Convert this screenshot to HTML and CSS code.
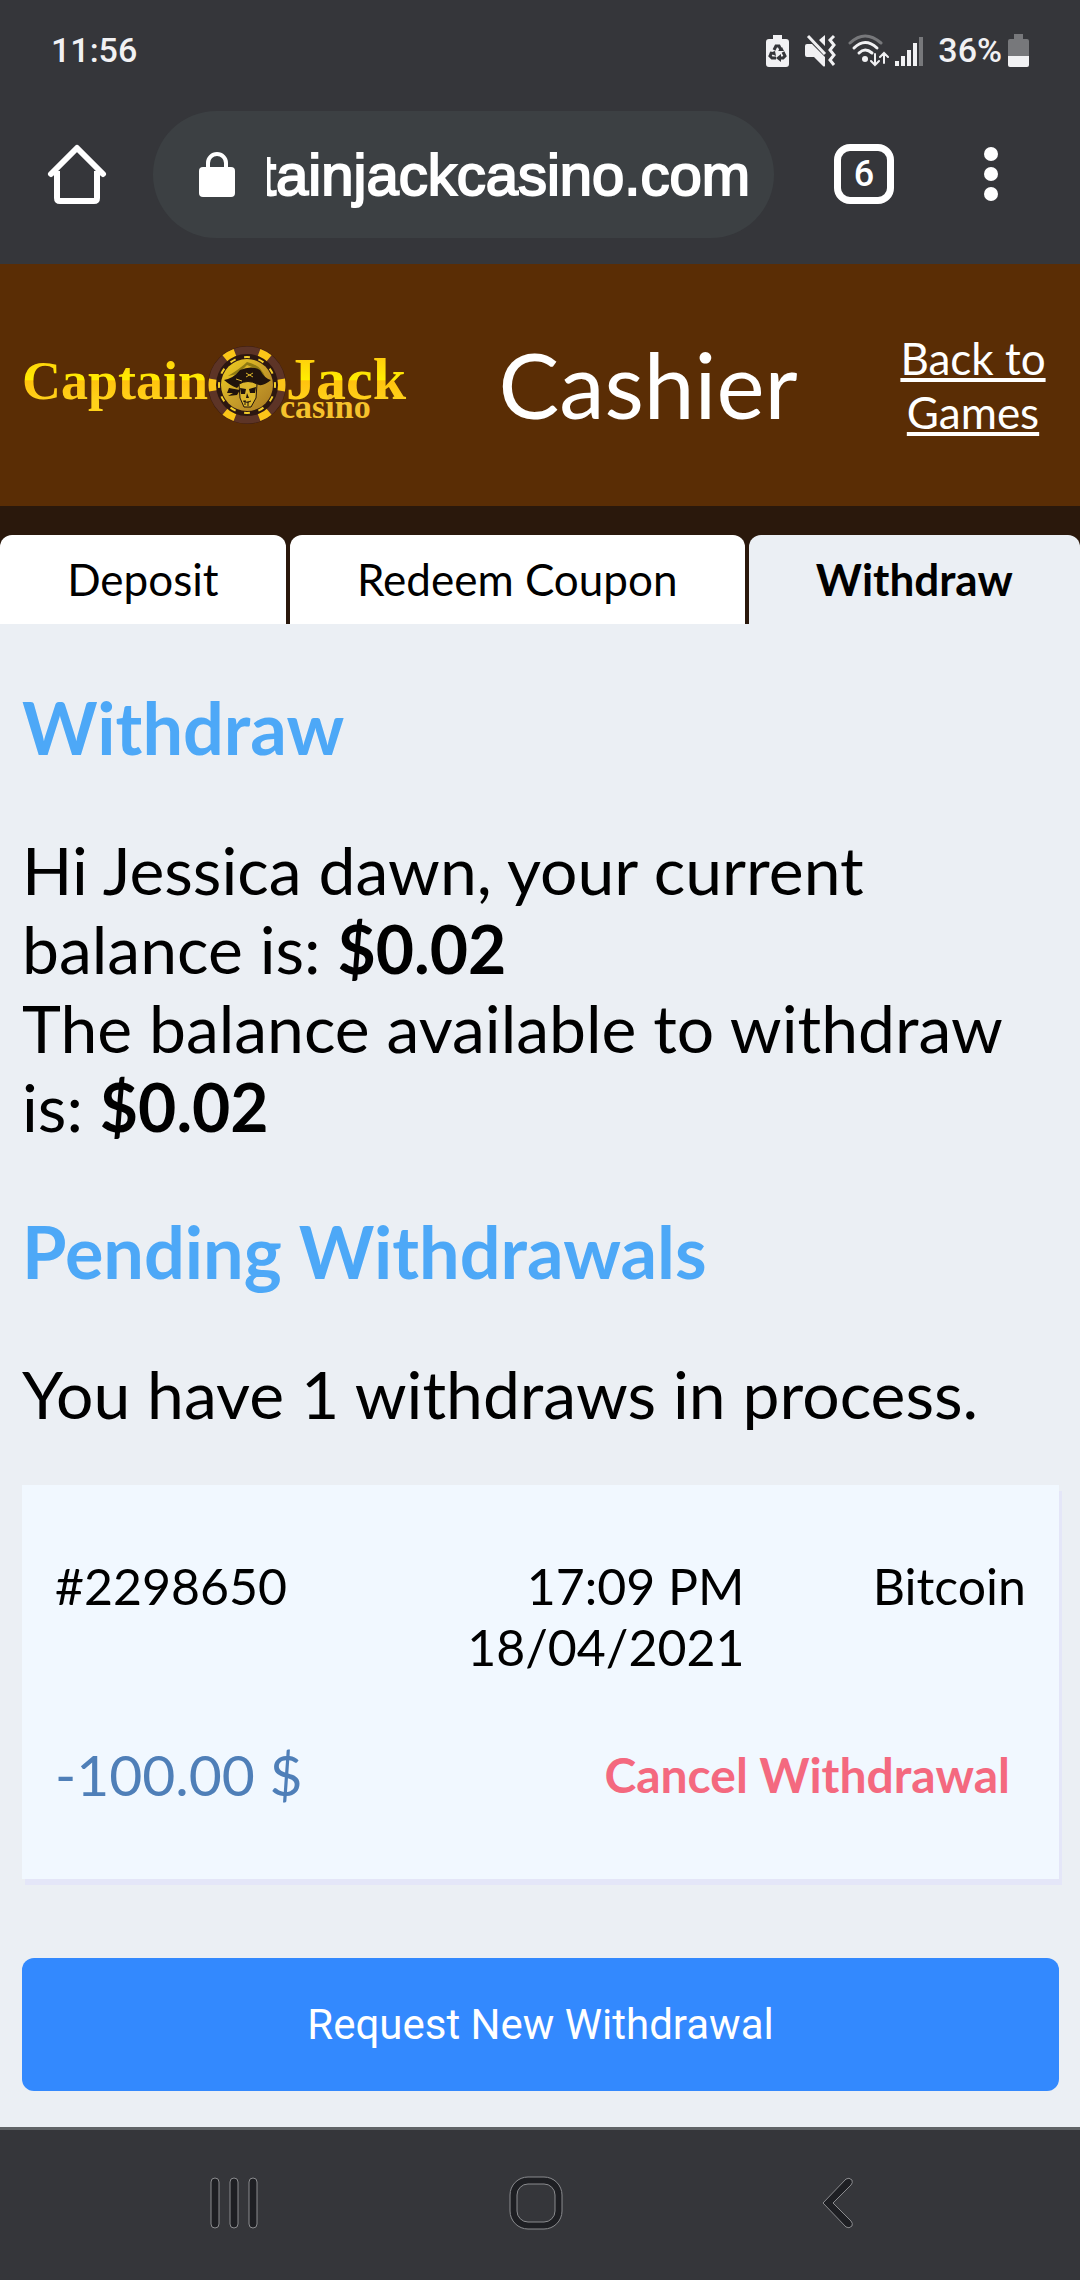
FILE: index.html
```html
<!DOCTYPE html>
<html lang="en">
<head>
    <meta charset="UTF-8">
    <meta name="viewport" content="width=device-width, initial-scale=1.0">
    <title>Captain Jack Casino - Cashier</title>
    <link rel="stylesheet" href="styles.css">
</head>
<body>

    <div class="chrome">
        <div class="status-bar">
            <span>11:56</span>
            <div class="status-icons">
                <svg width="23" height="33" viewBox="0 0 23 33">
                    <path fill="#f1f1f3" d="M7 1h9v4h4q3 0 3 3v22q0 3-3 3H3q-3 0-3-3V8q0-3 3-3h4z"/>
                    <g fill="none" stroke="#35363a" stroke-width="3">
                        <path d="M8 16l2-4h3l2 4"/>
                        <path d="M6 18l-2 4 2 2h4"/>
                        <path d="M17 18l2 4-2 2h-4"/>
                    </g>
                    <path fill="#35363a" d="M12 17h6l-2-4zM3 19l6-2 1 5zM15 20v8l-5-4z"/>
                </svg>
                <svg class="mute" width="31" height="33" viewBox="0 0 31 33">
                    <path fill="#f1f1f3" d="M0 12q0-2 2-2h5l13 13v9q-1 1-2 0l-9-9H2q-2 0-2-2zM20 1v11l-6-6z"/>
                    <path d="M3 2l17 18" stroke="#f1f1f3" stroke-width="3"/>
                    <path d="M29 2l-4 4 4 5-4 5 4 5-4 5 4 5" fill="none" stroke="#f1f1f3" stroke-width="3"/>
                </svg>
                <svg class="wifi" width="41" height="33" viewBox="0 0 41 33">
                    <g fill="none" stroke-width="3" stroke-linecap="round">
                        <path d="M2 9Q17-5 33 9" stroke="#77787b"/>
                        <path d="M6 14Q17 3 29 14" stroke="#f1f1f3"/>
                        <path d="M11 19Q17 13 24 19" stroke="#f1f1f3"/>
                        <path d="M27 20v11M23 27l4 4 4-4M36 29V19M32 23l4-4 4 4" stroke="#f1f1f3" stroke-width="2"/>
                    </g>
                    <circle cx="17" cy="25" r="3" fill="#f1f1f3"/>
                </svg>
                <svg class="signal" width="28" height="33" viewBox="0 0 28 33">
                    <path d="M2 27v5M8 22v10M14 16v16M20 9v23" stroke="#f1f1f3" stroke-width="4"/>
                    <path d="M26 3v29" stroke="#77787b" stroke-width="4"/>
                </svg>
                <span>36%</span>
                <svg width="21" height="33" viewBox="0 0 21 33">
                    <path fill="#77787b" d="M6 0h9v5h4q2 0 2 2v15H0V7q0-2 2-2h4z"/>
                    <path fill="#f1f1f3" d="M0 22h21v9q0 2-2 2H2q-2 0-2-2z"/>
                </svg>
            </div>
        </div>

        <div class="toolbar">
            <button class="icon-btn" aria-label="Home">
                <svg width="60" height="60" viewBox="0 0 60 60" fill="none" stroke="#fff" stroke-width="6" stroke-linejoin="round" stroke-linecap="round">
                    <path d="M4 30L30 4l26 26"/>
                    <path d="M10 27v27q0 3 3 3h34q3 0 3-3V27" stroke-linecap="butt"/>
                </svg>
            </button>
            <div class="address">
                <svg width="36" height="46" viewBox="0 0 36 46">
                    <path d="M9 18v-6a9 9 0 0 1 18 0v6" fill="none" stroke="#fff" stroke-width="4"/>
                    <rect y="16" width="36" height="30" rx="4" fill="#fff"/>
                </svg>
                <input class="url" type="text" aria-label="Address" value="tainjackcasino.com">
            </div>
            <button class="icon-btn tab-count" aria-label="Open tabs">6</button>
            <button class="icon-btn" aria-label="Menu">
                <svg width="14" height="54" viewBox="0 0 14 54" fill="#fff">
                    <circle cx="7" cy="7" r="7"/>
                    <circle cx="7" cy="27" r="7"/>
                    <circle cx="7" cy="47" r="7"/>
                </svg>
            </button>
        </div>
    </div>

    <header class="header">
        <svg class="logo" width="386" height="80" viewBox="0 0 386 80" role="img" aria-label="Captain Jack Casino">
            <defs>
                <linearGradient id="gold" x1="0" y1="10" x2="0" y2="56" gradientUnits="userSpaceOnUse">
                    <stop offset="0" stop-color="#ffc90f"/>
                    <stop offset=".54" stop-color="#ffee00"/>
                    <stop offset=".56" stop-color="#ffc20e"/>
                    <stop offset="1" stop-color="#ffd21a"/>
                </linearGradient>
                <linearGradient id="disc" x1="0" y1="0" x2="1" y2="1">
                    <stop offset="0" stop-color="#f3d21c"/>
                    <stop offset=".5" stop-color="#c9a02a"/>
                    <stop offset="1" stop-color="#a9781f"/>
                </linearGradient>
            </defs>
            <text class="logo-captain" x="0" y="54" fill="url(#gold)">Captain</text>
            <text class="logo-jack" x="264" y="54" fill="url(#gold)">Jack</text>

            <!-- poker chip -->
            <circle cx="225" cy="40" r="39" fill="#3a1c12"/>
            <circle cx="225" cy="40" r="34" fill="none" stroke="#5d3426" stroke-width="9"/>
            <circle cx="225" cy="40" r="34" fill="none" stroke="#fbc518" stroke-width="9" pathLength="60" stroke-dasharray="3.2 6.8" stroke-dashoffset="1.6"/>
            <circle cx="225" cy="40" r="31" fill="#2c1710"/>
            <circle cx="225" cy="40" r="28" fill="none" stroke="#f4cf2a" stroke-width="2" pathLength="120" stroke-dasharray="4 6" stroke-dashoffset="2"/>
            <circle cx="225" cy="40" r="26" fill="url(#disc)"/>
            <path fill="#8f7a12" d="M206 31q13-8 19-14 14 3 18 15l-8-8-10-4-9 9z"/>
            <path fill="#20130c" d="M202 35q10-2 16-10 12-5 20 0 5 9 11 10-7 6-12 5-14-6-22 3-6-2-13-8z"/>
            <path fill="#dcb62c" d="M217 39q9-5 18 0l-1 14-5 9h-7l-4-9z" stroke="#20130c"/>
            <path fill="#20130c" d="M218 43l6 1-1 5h-4zM227 44l7-2-1 6h-5zM225 48l2 5h-3zM207 43l11 2-3 5-9 1 5-3-6 0z"/>
            <path d="M221 56q5 3 8 0M223 55v5M226 56v5" stroke="#20130c" fill="none"/>
            <path d="M224 28l7 4m0-4l-7 4M214 34l6 2" stroke="#dcb62c"/>
            <text class="logo-casino" x="258" y="73" fill="#f6c22c">casino</text>
        </svg>
        <h1 class="title">Cashier</h1>
        <a class="back" href="#">Back to Games</a>
    </header>

    <nav class="tabs">
        <a class="tab" href="#">Deposit</a>
        <a class="tab" href="#">Redeem Coupon</a>
        <a class="tab active" href="#">Withdraw</a>
    </nav>

    <main class="content">
        <h2>Withdraw</h2>
        <p>Hi Jessica dawn, your current balance is: <b>$0.02</b><br>The balance available to withdraw is: <b>$0.02</b></p>

        <h2>Pending Withdrawals</h2>
        <p>You have 1 withdraws in process.</p>

        <div class="card">
            <div class="card-info">
                <span>#2298650</span>
                <span class="right">17:09 PM<br>18/04/2021</span>
                <span class="right">Bitcoin</span>
            </div>
            <div class="card-actions">
                <span class="amount">-100.00 $</span>
                <button class="cancel">Cancel Withdrawal</button>
            </div>
        </div>

        <button class="btn">Request New Withdrawal</button>
    </main>

    <div class="nav-bar">
        <button class="icon-btn" aria-label="Recent apps">
            <svg width="54" height="54" viewBox="0 0 54 54" fill="#1e1f23" stroke="#8a8b8e">
                <rect x="4" y="2" width="8" height="50" rx="4"/>
                <rect x="23" y="2" width="8" height="50" rx="4"/>
                <rect x="42" y="2" width="8" height="50" rx="4"/>
            </svg>
        </button>
        <button class="icon-btn" aria-label="Home screen">
            <svg width="54" height="54" viewBox="0 0 54 54" fill="#1e1f23" stroke="#8a8b8e">
                <rect x="1" y="1" width="52" height="52" rx="18"/>
                <rect x="8" y="8" width="38" height="38" rx="11" fill="#35363a"/>
            </svg>
        </button>
        <button class="icon-btn" aria-label="Back">
            <svg width="54" height="54" viewBox="0 0 54 54" fill="#1e1f23" stroke="#8a8b8e">
                <path d="M12 27L35 3q3-2 6 1 1 3-1 5L22 27l18 18q2 2 1 5-3 3-6 1z"/>
            </svg>
        </button>
    </div>

</body>
</html>
```

FILE: styles.css
```css
* { box-sizing: border-box; }
body { font-family: Lato, sans-serif; margin: 0; background-color: #ebeff4; color: #000; min-height: 100vh; display: flex; flex-direction: column; }
svg { display: block; flex: none; }
button { font: inherit; border: none; background: none; padding: 0; cursor: pointer; }
h1, h2, p { margin: 0; font-weight: normal; }

/* browser chrome */
.chrome { background-color: #35363a; color: #fff; height: 264px; }
.status-bar { display: flex; justify-content: space-between; align-items: center; height: 100px; padding: 0 51px; font-family: Roboto, sans-serif; font-size: 34px; font-weight: 500; color: #f1f1f3; }
.status-icons { display: flex; align-items: center; gap: 6px; }
.mute { margin-left: 10px; }
.wifi { margin-left: 6px; }
.signal { margin-right: 9px; }
.toolbar { display: flex; align-items: center; height: 148px; padding: 0 82px 0 47px; }
.icon-btn { display: flex; align-items: center; justify-content: center; }
.address { flex: 1; min-width: 0; display: flex; align-items: center; gap: 32px; height: 127px; margin: 0 60px 0 46px; padding: 0 24px 0 46px; border-radius: 64px; background-color: #3c4043; }
.url { flex: 1; min-width: 0; border: none; padding: 0; outline: none; background: none; color: #fff; direction: rtl; font-family: "Liberation Sans", sans-serif; font-size: 58px; -webkit-text-stroke: 2px #fff; }
.tab-count { width: 60px; height: 60px; margin-right: 90px; border: 7px solid #fff; border-radius: 16px; color: #fff; font-family: Roboto, sans-serif; font-size: 36px; font-weight: 500; }

/* site header */
.header { display: flex; align-items: center; height: 242px; padding: 0 22px; background-color: #5a2d05; color: #fff; }
.logo { font-family: "Liberation Serif", serif; font-weight: bold; }
.logo-captain { font-size: 54px; }
.logo-jack { font-size: 60px; }
.logo-casino { font-size: 34px; }
.title { flex: 1; font-size: 91px; line-height: 102px; padding-bottom: 2px; text-align: center; }
.back { width: 170px; color: #fff; font-size: 44px; line-height: 54px; text-align: center; }

.tabs { display: flex; gap: 4px; padding-top: 29px; background-color: #2a180c; }
.tab { flex: auto; height: 89px; border-radius: 12px 12px 0 0; background-color: #fff; color: #000; font-size: 44px; line-height: 89px; text-align: center; text-decoration: none; }
.active { background-color: #ebeff4; font-weight: bold; }

.content { flex: 1; padding: 61px 21px 35px 22px; }
.content h2 { color: #4da8f7; font-size: 72px; font-weight: bold; line-height: 84px; }
.content p { margin: 61px 0 63px; font-size: 66px; line-height: 79px; }
.content .card { margin-top: -11px; padding: 71px 33px 74px; background-color: #f1f8ff; box-shadow: 3px 6px 0 #e4e6f8; font-size: 50px; line-height: 61px; }
.card-info { display: grid; grid-template-columns: 25fr 46fr 29fr; }
.right { text-align: right; }
.card-actions { display: flex; justify-content: space-between; align-items: center; margin-top: 66px; padding-right: 16px; }
.amount { color: #4f7fb8; font-size: 57px; }
.cancel { color: #f4697f; font-size: 48px; font-weight: bold; }
.btn { width: 100%; height: 133px; margin-top: 79px; border-radius: 12px; background-color: #3389fe; color: #fff; font-family: Roboto, sans-serif; font-size: 42px; }

/* system navigation */
.nav-bar { display: grid; grid-template-columns: repeat(3, 1fr); height: 153px; padding: 0 91px 4px 83px; border-top: 3px solid #5f6366; background-color: #35363a; }
```
